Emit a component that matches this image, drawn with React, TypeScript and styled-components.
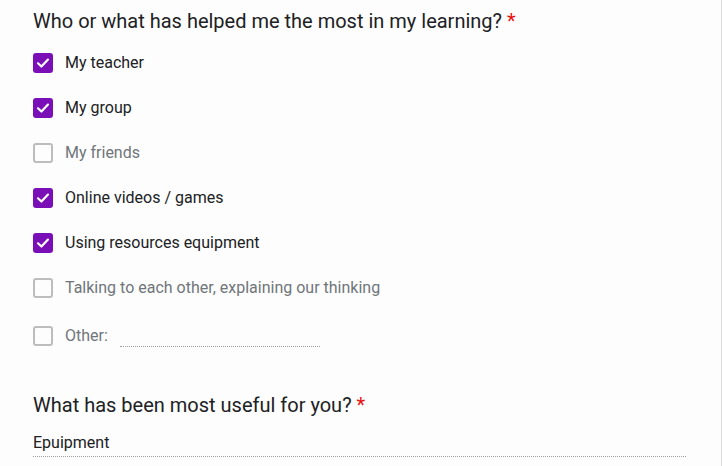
import React from "react";
import styled, { createGlobalStyle } from "styled-components";

const Global = createGlobalStyle`
  html, body { margin: 0; padding: 0; background: #fff; }
  body { font-family: Roboto, "Noto Sans", Arial, sans-serif; }
`;

const Page = styled.div`
  width: 722px;
  height: 466px;
  box-sizing: border-box;
  border-right: 1px solid #dadada;
  background: #fdfdfd;
  padding: 7px 0 0 33px;
  overflow: hidden;
`;

const Question = styled.div<{ $gap?: number }>`
  display: flex;
  flex-direction: column;
  margin-bottom: ${(p) => p.$gap ?? 0}px;
`;

const Title = styled.div`
  font-size: 20px;
  line-height: 28px;
  color: #202124;
`;

const Star = styled.span`
  color: #e8110f;
  margin-left: 5px;
`;

const Options = styled.div`
  display: flex;
  flex-direction: column;
  margin-top: 5px;
`;

const Option = styled.label<{ $h?: number }>`
  display: flex;
  align-items: center;
  height: ${(p) => p.$h ?? 45}px;
`;

const Box = styled.span<{ $checked: boolean }>`
  width: 20px;
  height: 20px;
  box-sizing: border-box;
  border-radius: 3px;
  flex: none;
  display: flex;
  align-items: center;
  justify-content: center;
  background: ${(p) => (p.$checked ? "#7a0fb8" : "transparent")};
  border: ${(p) => (p.$checked ? "none" : "2px solid #bdbdbd")};
`;

const Label = styled.span<{ $checked: boolean }>`
  margin-left: 12px;
  font-size: 16px;
  color: ${(p) => (p.$checked ? "#202124" : "#70757a")};
`;

const OtherLine = styled.span`
  width: 200px;
  margin-left: 12px;
  align-self: center;
  margin-top: 22px;
  border-bottom: 1px dotted #9e9e9e;
`;

const Answer = styled.div`
  width: 653px;
  margin-top: 13px;
  font-size: 16px;
  line-height: 22px;
  color: #202124;
  border-bottom: 1px dotted #9e9e9e;
  padding-bottom: 2px;
`;

const Check = () => (
  <svg width="16" height="16" viewBox="0 0 16 16">
    <path d="M3 8.3 L6.4 11.5 L13 4.6" fill="none" stroke="#fff" strokeWidth="2.2" strokeLinecap="round" strokeLinejoin="round" />
  </svg>
);

const items: [string, boolean][] = [
  ["My teacher", true],
  ["My group", true],
  ["My friends", false],
  ["Online videos / games", true],
  ["Using resources equipment", true],
  ["Talking to each other, explaining our thinking", false],
];

export default function App() {
  return (
    <>
      <Global />
      <Page>
        <Question $gap={30}>
          <Title>
            Who or what has helped me the most in my learning?<Star>*</Star>
          </Title>
          <Options>
            {items.map(([t, c]) => (
              <Option key={t}>
                <Box $checked={c}>{c && <Check />}</Box>
                <Label $checked={c}>{t}</Label>
              </Option>
            ))}
            <Option $h={51}>
              <Box $checked={false} />
              <Label $checked={false}>Other:</Label>
              <OtherLine />
            </Option>
          </Options>
        </Question>
        <Question>
          <Title>
            What has been most useful for you?<Star>*</Star>
          </Title>
          <Answer>Epuipment</Answer>
        </Question>
      </Page>
    </>
  );
}
